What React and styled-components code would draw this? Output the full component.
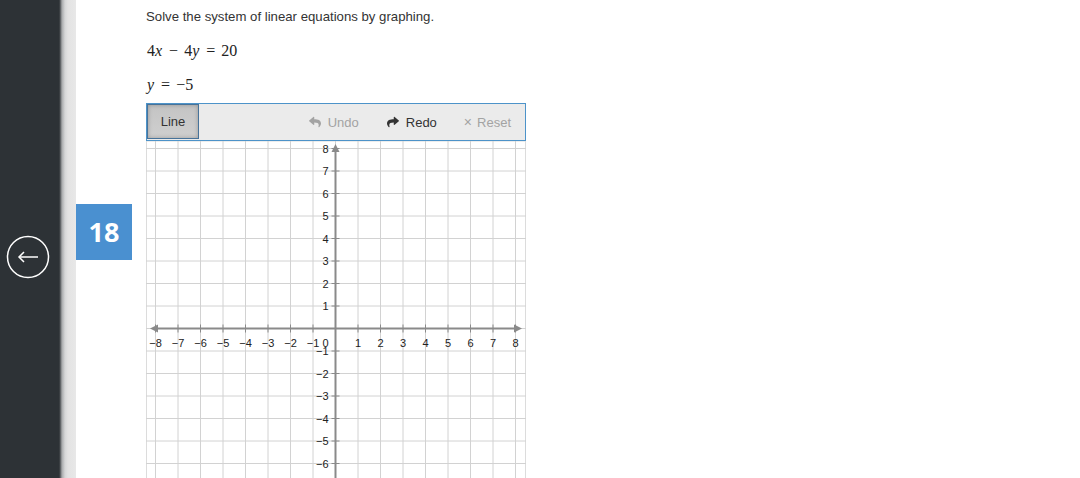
import styled, { createGlobalStyle } from "styled-components"
import { FaReply, FaShare } from "react-icons/fa"

const GlobalStyle = createGlobalStyle`
    html, body {
        margin: 0;
        padding: 0;
        background: #ffffff;
        overflow: hidden;
        font-family: "Liberation Sans", Arial, sans-serif;
    }
`
const Page = styled.div`
    display: flex;
    align-items: flex-start;
    height: 478px;
    width: 1080px;
    overflow: hidden;
`
const Sidebar = styled.div`
    width: 76px;
    flex: none;
    height: 478px;
    background: linear-gradient(to right, #2d3236 0px, #2d3236 59px, #4a4e51 60px, #a9abad 62px, #d6d7d8 65px, #e3e3e3 68px, #e8e8e8 76px);
    display: flex;
    flex-direction: column;
    padding-top: 235px;
    box-sizing: border-box;
`
const BackButton = styled.div`
    width: 44px;
    height: 44px;
    margin-left: 6px;
`
const BadgeColumn = styled.div`
    width: 70px;
    flex: none;
    padding-top: 204px;
`
const Badge = styled.div`
    width: 56px;
    height: 56px;
    background: #4a90d0;
    color: #ffffff;
    font-family: "Open Sans", "Liberation Sans", sans-serif;
    font-weight: 700;
    font-size: 27px;
    display: flex;
    align-items: center;
    justify-content: center;
    padding-bottom: 2px;
    box-sizing: border-box;
`
const Content = styled.div`
    display: flex;
    flex-direction: column;
    padding-top: 8px;
    flex: none;
    & > * {
        flex: none;
    }
`
const Prompt = styled.p`
    margin: 0;
    font-size: 13.2px;
    line-height: 18px;
    color: #333333;
`
const Equation = styled.div`
    margin-top: ${p => p.$top}px;
    font-family: "Liberation Serif", "Times New Roman", serif;
    font-size: 16px;
    line-height: 20px;
    height: 20px;
    color: #222222;
    white-space: pre;
    padding-left: 1px;
`
const Var = styled.i`
    font-style: italic;
    padding-right: 1px;
`
const Op = styled.span`
    padding: 0 6px;
`
const Toolbar = styled.div`
    margin-top: 8px;
    width: 380px;
    height: 38px;
    box-sizing: border-box;
    border: 1px solid #4d93c9;
    background: #ebebeb;
    display: flex;
    align-items: stretch;
`
const ToolButton = styled.div`
    width: 52px;
    box-sizing: border-box;
    border: 1px solid #47739a;
    background: linear-gradient(#c4c4c4, #cfcfcf);
    box-shadow: inset 0 0 4px rgba(0, 0, 0, 0.25);
    display: flex;
    align-items: center;
    justify-content: center;
    font-size: 13px;
    color: #333333;
    margin-bottom: 1px;
`
const Actions = styled.div`
    flex: 1;
    display: flex;
    align-items: center;
    justify-content: flex-end;
    padding-right: 14px;
`
const Action = styled.div`
    display: flex;
    align-items: center;
    gap: 7px;
    font-size: 13px;
    margin-left: ${p => p.$gap || 0}px;
    color: ${p => (p.$disabled ? "#a3a3a3" : "#333333")};
    svg {
        width: 12px;
        height: 12px;
    }
`
const Times = styled.span`
    font-size: 14px;
    margin-right: -2px;
`
const GraphWrap = styled.div`
    width: 380px;
    height: 380px;
`

const STEP = 22.5
const OX = 189.5
const OY = 187.5
const SIZE = 380

function Graph() {
    const lines = []
    for (let i = -8; i <= 8; i++) {
        const x = OX + i * STEP
        const y = OY + i * STEP
        lines.push(<line key={"v" + i} x1={x} y1={0} x2={x} y2={SIZE} stroke="#d2d2d2" strokeWidth="1" />)
        lines.push(<line key={"h" + i} x1={0} y1={y} x2={SIZE} y2={y} stroke="#d2d2d2" strokeWidth="1" />)
    }
    const labels = []
    for (let i = -8; i <= 8; i++) {
        if (i === 0) continue
        const txt = i < 0 ? "\u2212" + Math.abs(i) : String(i)
        const x = OX + i * STEP
        const y = OY - i * STEP
        labels.push(
            <line key={"tx" + i} x1={x} y1={OY - 4} x2={x} y2={OY + 4} stroke="#8a8a8a" strokeWidth="1" />,
            <line key={"ty" + i} x1={OX - 4} y1={y} x2={OX + 4} y2={y} stroke="#8a8a8a" strokeWidth="1" />,
            <text key={"lx" + i} x={x} y={OY + 18} textAnchor="middle" fontSize="11" fill="#222">{txt}</text>,
            <text key={"ly" + i} x={OX - 7} y={y + 4} textAnchor="end" fontSize="11" fill="#222">{txt}</text>
        )
    }
    return (
        <svg width={SIZE} height={SIZE} viewBox={`0 0 ${SIZE} ${SIZE}`} fontFamily="Liberation Sans, Arial, sans-serif">
            <rect x="0.5" y="0" width={SIZE - 1} height={SIZE} fill="#ffffff" stroke="#dcdcdc" />
            {lines}
            <line x1={8} y1={OY} x2={SIZE - 8} y2={OY} stroke="#8a8a8a" strokeWidth="2" />
            <polygon points={`4,${OY} 12,${OY - 4} 12,${OY + 4}`} fill="#8a8a8a" />
            <polygon points={`${SIZE - 4},${OY} ${SIZE - 12},${OY - 4} ${SIZE - 12},${OY + 4}`} fill="#8a8a8a" />
            <line x1={OX} y1={8} x2={OX} y2={SIZE} stroke="#8a8a8a" strokeWidth="2" />
            <polygon points={`${OX},3 ${OX - 4},11 ${OX + 4},11`} fill="#8a8a8a" />
            {labels}
            <text x={OX - 7} y={OY + 18} textAnchor="end" fontSize="11" fill="#222">0</text>
        </svg>
    )
}

function App() {
    return (
        <Page>
            <GlobalStyle />
            <Sidebar>
                <BackButton>
                    <svg width="44" height="44" viewBox="0 0 44 44">
                        <circle cx="22" cy="22" r="20.5" fill="none" stroke="#ffffff" strokeWidth="1.5" />
                        <line x1="13" y1="22" x2="32" y2="22" stroke="#ffffff" strokeWidth="1.5" />
                        <polyline points="18,17 13,22 18,27" fill="none" stroke="#ffffff" strokeWidth="1.5" />
                    </svg>
                </BackButton>
            </Sidebar>
            <BadgeColumn>
                <Badge>18</Badge>
            </BadgeColumn>
            <Content>
                <Prompt>Solve the system of linear equations by graphing.</Prompt>
                <Equation $top={15}>
                    4<Var>x</Var><Op>{"\u2212"}</Op>4<Var>y</Var><Op>=</Op>20
                </Equation>
                <Equation $top={14}>
                    <Var>y</Var><Op>=</Op>{"\u2212"}5
                </Equation>
                <Toolbar>
                    <ToolButton>Line</ToolButton>
                    <Actions>
                        <Action $disabled>
                            <FaReply />Undo
                        </Action>
                        <Action $gap={28}>
                            <FaShare />Redo
                        </Action>
                        <Action $disabled $gap={27}>
                            <Times>×</Times>Reset
                        </Action>
                    </Actions>
                </Toolbar>
                <GraphWrap>
                    <Graph />
                </GraphWrap>
            </Content>
        </Page>
    )
}

export default App
